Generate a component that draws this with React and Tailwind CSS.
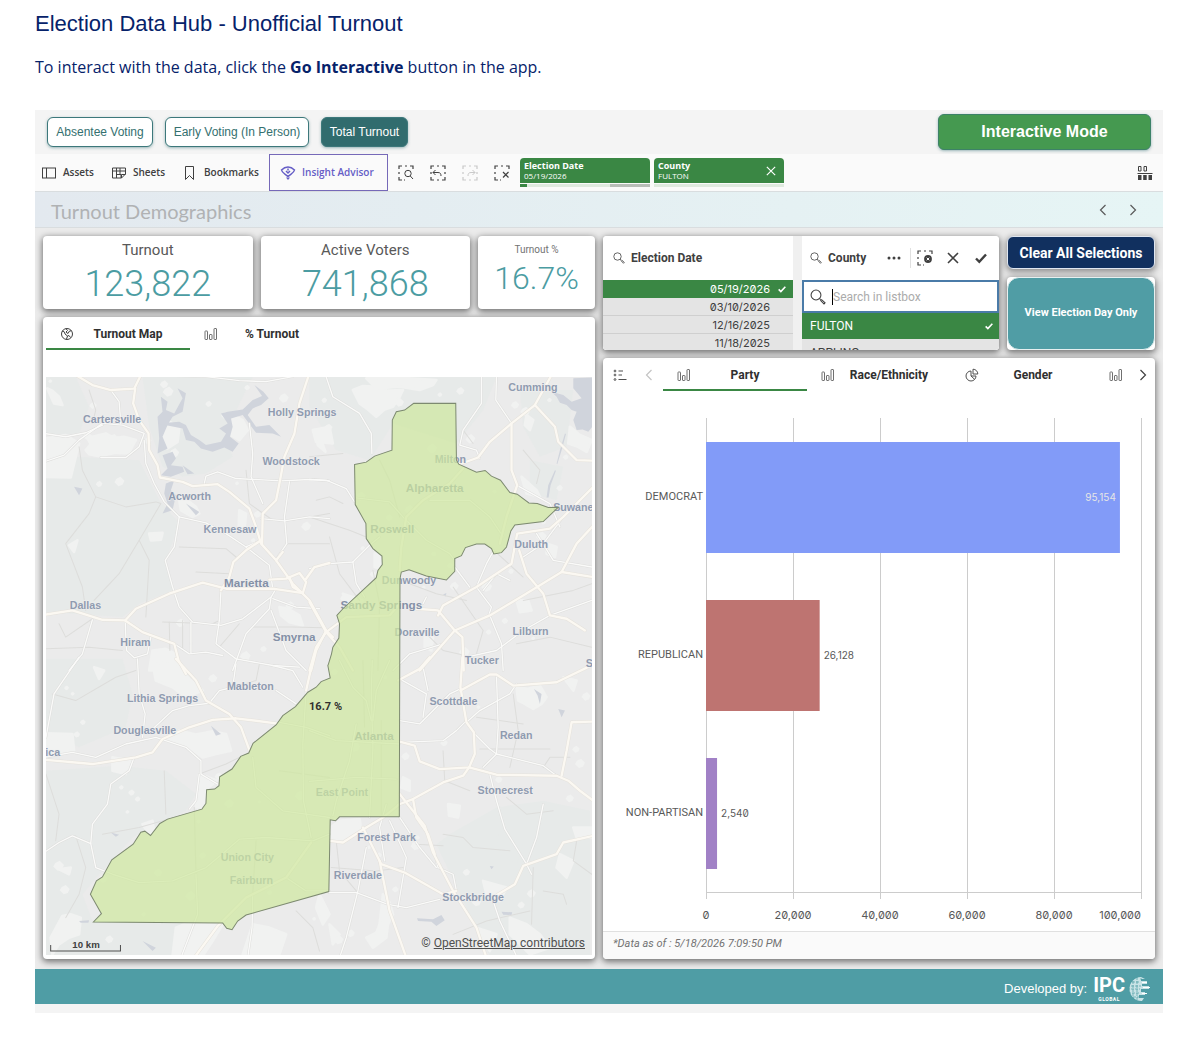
import { useState } from 'react';

const dates = ['05/19/2026', '03/10/2026', '12/16/2025', '11/18/2025'];

const parties = [
  { name: 'DEMOCRAT', votes: 95154, label: '95,154', color: '#829bf8', inside: true },
  { name: 'REPUBLICAN', votes: 26128, label: '26,128', color: '#be7471' },
  { name: 'NON-PARTISAN', votes: 2540, label: '2,540', color: '#a181c6' },
];

const ticks = ['0', '20,000', '40,000', '60,000', '80,000', '100,000'];

// base map, split in four tiles; each tile has its own origin
const tiles = [
  {
    x: 0, y: 0,
    major: [
      'M110 15L160 45L215 60L285 56L305 15', 'M288 56L282 100L300 150L328 190L330 240L355 285L362 322L430 335L460 348L535 342L570 365L630 415L650 470L665 520L710 570L760 640L810 690L860 780L880 800',
      'M808 15L780 100L765 190L735 260L720 340L710 390L670 430L668 520', 'M15 733L100 720L190 748L258 750L290 715L390 670L490 637L560 655L700 655L790 668',
      'M258 750L310 785L405 820L418 870L440 910', 'M860 780L830 840L815 900', 'M665 510L620 540L582 575L570 620L545 660',
      'M710 570L730 545M690 628L740 625L780 608L800 635L790 668L760 650L750 620M800 625L825 590L870 578',
    ],
    minor: [
      'M15 275L75 255L120 210L190 160L250 165L315 190L300 230L260 262L185 262', 'M215 60L240 95L245 160', 'M315 210L320 280L345 340L375 395L420 440L405 530L378 570L400 650L420 710L460 755L545 765L610 745L695 680L710 655',
      'M495 340L500 318L535 305L590 325L725 332L810 328L870 332', 'M420 440L500 458L560 490L620 530', 'M665 445L735 452L810 440L870 445', 'M750 335L735 440L742 520L715 560',
      'M258 750L262 840L285 862L325 850L335 800', 'M160 748L130 850L90 900', 'M545 660L540 750L530 820L590 865L700 885L780 890', 'M695 680L690 715L620 790L580 900', 'M455 755L455 850M405 820L450 850L500 845L550 855',
      'M695 720L740 840L800 900', 'M665 510L620 530L690 585L700 655', 'M320 15L500 20L600 32L680 35L760 20', 'M15 190L80 200L140 188L190 165', 'M630 160L640 250L635 320L670 400', 'M700 685L770 710L840 715',
    ],
    local: ['M120 230L130 300L170 380L150 430L80 520L130 650L140 720', 'M170 380L260 410L350 395L365 400L300 510L240 610L165 690', 'M300 510L330 570L320 740', 'M420 530L560 535L590 560', 'M470 605L570 610', 'M370 755L520 760L540 750', 'M390 755L392 840M430 750L430 840', 'M60 760L80 800L160 745', 'M21 835L150 830L250 840', 'M620 300L630 400L700 450', 'M755 450L870 430', 'M540 830L600 760M640 770L760 770L850 772', 'M150 60L170 120L160 160', 'M742 520L870 520'],
    woods: ['M21 21H110L150 110L120 190L21 195Z', 'M310 21H640L600 100L560 200L580 260L500 310L430 320L370 290L330 170Z', 'M21 320L95 320L110 260L300 270L360 390L420 460L380 570L400 660L300 700L250 740L180 735L21 725Z'],
    pale: ['M21 205L80 195L120 220L95 322L21 320Z', 'M140 195L160 200L200 190L225 204L255 200L290 210L278 232L270 250L230 248L180 258L150 252L140 240L155 222Z', 'M385 150L420 175L415 215L385 235L372 200Z', 'M720 710L745 715L780 735L790 765L750 755L725 735Z', 'M340 840L380 835L410 850L420 880L440 900H330Z', 'M90 525L115 510L105 545Z', 'M330 490L370 488L365 508L335 510Z', 'M825 180L845 210L858 245L835 225Z', 'M570 150L590 140L610 150L625 180L600 210L575 195Z', 'M600 420L620 430L615 480L598 470Z', 'M420 390L450 395L470 410L480 430L460 440L425 420Z', 'M25 55L40 62L60 80L70 105L45 100Z'],
    water: [
      'M365 80L385 95L380 120L405 130L430 85L415 55L440 70L430 125L400 140L385 165L370 200L385 235L355 250L360 205L355 140L370 125Z', 'M355 160L420 155L440 165L455 195L480 210L500 225L545 215L560 190L540 175L565 160L545 130L565 125L610 118L640 90L668 78L645 45L672 65L688 85L665 105L640 115L625 135L650 170L690 165L725 200L700 190L650 188L610 135L575 145L580 170L572 200L598 220L580 245L555 232L520 245L485 235L465 215L440 210L430 175Z', 'M370 255L400 245L410 265L395 285L430 290L435 305L395 320L365 315L385 295Z', 'M380 340L405 330L395 360L410 375L400 420L370 430L385 400L375 370Z', 'M430 285L465 310L445 312Z', 'M105 350L130 355L120 375Z', 'M440 400L480 425L470 435Z',
    ],
  },
  {
    x: 810, y: 0,
    major: [
      'M450 282L505 262L540 215L605 160L675 105L725 15', 'M675 105L735 170L745 215L800 270L860 272', 'M605 160L605 300L622 345L590 440L570 520', 'M0 695L25 740L50 785L90 830L130 900', 'M50 785L20 830L0 900',
      'M270 600L275 530L290 440L340 390L420 340L460 295', 'M330 900L435 780L540 735L640 675L755 605L800 520L860 455', 'M320 715L385 720L435 780L458 800L462 900', 'M755 605L860 622', 'M385 735L400 705L500 650L605 580L622 490L720 475L760 440L860 340', 'M628 540L650 610L700 670L720 735L770 745L825 780', 'M50 785L110 740L240 735L270 700',
    ],
    minor: [
      'M50 21L70 80L150 130L185 190L187 250', 'M515 15L515 100L460 180L450 225L500 240L510 265', 'M560 15L558 90L605 160', 'M0 328L50 330L110 355L135 395', 'M0 595L60 580L130 575L180 525L210 500', 'M500 650L530 580L552 540', 'M435 780L400 820L300 850L250 900', 'M540 735L575 820L580 900', 'M500 650L545 710L535 740', 'M140 383L240 395L280 440L350 510L420 550L435 570', 'M360 390L480 390L540 440L580 500', 'M620 345L720 400L750 470', 'M760 440L700 520L640 560', 'M720 735L640 780L560 840L470 860', 'M720 735L845 690', 'M340 700L350 680M435 590L480 650', 'M130 575L140 640L165 680', 'M600 630L560 610L520 660M680 490L730 570L845 590',
    ],
    local: ['M0 440L120 480L170 500', 'M60 500L90 610L150 690', 'M460 180L490 220', 'M640 240L690 300L680 340', 'M210 270L240 330L270 440', 'M530 520L640 620M640 690L790 660L845 640', 'M300 640L380 670L470 690', 'M430 650L520 780L500 850', 'M340 780L400 840L490 860', 'M620 820L720 800L845 830', 'M0 260L100 250M20 390L60 380L100 400', 'M190 600L210 700L205 900'],
    woods: ['M0 21H560L520 120L440 220L250 160L180 270L80 240L0 110Z', 'M630 60L790 60L770 230L690 260L640 170Z', 'M660 270L760 290L740 390L660 370Z'],
    pale: ['M130 60L160 48L190 50L235 62L280 60L268 84L250 110L225 118L200 140L175 118L150 100Z', 'M170 25L250 22L380 30L370 45L330 60L270 50L200 55Z', 'M650 135L670 150L660 180L645 165Z', 'M635 320L680 360L690 380L650 370Z', 'M195 550L215 555L212 595L195 590Z', 'M345 790L370 800L365 840L345 830Z', 'M620 690L655 690L665 720L630 725Z', 'M780 170L810 195L845 210L830 245L800 228L775 220Z', 'M100 670L160 690L130 720Z', 'M710 520L740 530L735 560L710 550Z', 'M10 180L60 170L70 220L20 215Z'],
    water: ['M790 25L870 21V165L845 172L835 185L818 178L800 180L790 150L800 125L785 120L770 105L750 98L740 80L725 65L760 75L785 95L815 85L790 55Z', 'M765 190L750 240L740 280L742 282L755 240L768 192Z', 'M735 300L715 345L710 382L716 382L722 345L738 302Z', 'M400 672L410 668L408 678Z'],
  },
  {
    x: 0, y: 870,
    major: [
      'M15 297L160 310L290 290L340 275L370 235L450 200L520 178L590 173L710 188', 'M410 -5L470 60L500 120L570 160L605 200L630 268', 'M820 0L800 90', 'M465 890L535 795L620 710L740 650L815 545',
    ],
    minor: [
      'M15 575L60 545L100 525L155 548L160 490L205 430L215 370L270 330L285 290', 'M155 548L170 620L220 640L300 665L400 660L500 620L560 570L600 535L680 530L820 540L870 520', 'M120 -10L45 100L21 230', 'M295 -5L300 100L318 160L310 230', 'M15 290L100 275L170 290L260 250L350 230L440 260L485 300L485 340L535 370', 'M480 340L470 420L450 445', 'M640 700L638 800L625 890', 'M470 640L475 760L425 890', 'M800 90L790 250L792 420L815 530', 'M330 215L400 150L450 135L510 128L540 90L580 80L590 10', 'M700 15L760 30L790 80', 'M710 90L770 130', 'M640 290L650 380L730 450L870 470', 'M720 185L800 200L870 225', 'M740 650L800 690L870 690',
    ],
    local: ['M40 100L110 120L230 50L290 30', 'M21 340L60 460L50 540', 'M375 330L380 460', 'M110 525L140 620L120 700L80 770', 'M190 520L300 500L440 460', 'M465 440L470 640', 'M720 330L870 350', 'M480 340L560 310L600 290', 'M660 10L650 60L550 90', 'M650 540L640 700', 'M770 750L820 800L840 870'],
    woods: ['M21 -5L250 -5L280 100L260 200L120 260L21 210Z', 'M21 330L240 315L380 330L470 400L440 450L280 530L180 640L130 700L160 780L430 785L400 885L21 885Z'],
    pale: ['M21 218L100 220L105 270L21 280Z', 'M420 210L470 222L520 212L560 220L568 245L575 270L530 280L490 290L450 260L380 240Z', 'M340 10L380 8L420 20L455 60L490 90L440 110L400 80L350 60Z', 'M70 765L95 760L125 770L120 820L90 830L60 850L40 880L35 830Z', 'M310 490L340 480L345 515L330 520Z', 'M480 340L535 360L500 385L490 440L470 440Z', 'M410 800L440 788L550 790L520 840L490 885H400Z', 'M640 790L690 800L740 820L720 880H610Z', 'M220 290L275 300L260 340L220 330Z', 'M60 625L95 620L90 640Z', 'M165 20L195 30L180 55Z'],
    water: ['M515 195L545 220L530 225Z', 'M120 780L150 778L148 785L125 785Z', 'M310 840L350 860L340 870Z', 'M215 515L240 522L230 528Z'],
  },
  {
    x: 810, y: 870,
    major: [
      'M265 60L330 25L360 -10', 'M458 -10L452 80L470 185L492 215L495 280L478 320L390 325L330 302L315 255L270 243', 'M452 90L540 42L560 42L610 75L740 65L850 12', 'M478 320L560 342L740 345L775 360L810 390L850 420', 'M265 432L310 415L400 365L460 345L478 320',
      'M270 400L345 495L370 575L430 690L500 800L530 890', 'M160 500L215 610L285 635L330 660L400 700L440 690', 'M850 183L785 185L770 270L755 345', 'M850 525L760 545L740 580L640 615L615 670L540 715', 'M62 540L100 545L170 500L220 470L270 430', 'M210 600L240 750L290 890', 'M310 415L320 470L355 520L375 580',
    ],
    minor: [
      'M58 695L140 695L235 730L290 740L390 715', 'M170 560L145 690L110 830L90 890', 'M540 340L560 420L585 505L650 610L665 640', 'M240 480L290 590L265 740', 'M270 245L400 240L440 210L470 180', 'M270 180L330 190L360 160L420 100L452 85', 'M560 42L565 200L560 280L520 320', 'M490 215L540 265L560 280L700 315L740 345', 'M470 185L510 150L600 100L620 70', 'M550 720L570 780L620 885', 'M270 55L350 100L340 170M340 20L355 90', 'M375 580L385 620L430 640L440 690', 'M230 430L210 500L225 600', 'M188 0L185 100L190 260L180 470', 'M90 0L130 80L170 120L185 180M240 0L200 90L190 180', 'M140 190L120 300L80 420L70 465', 'M700 430L680 530L650 610', 'M0 210L80 240L270 250', 'M0 362L140 350L260 355', 'M270 470L330 560L380 620',
    ],
    local: ['M610 100L625 210L600 320', 'M510 265L720 265', 'M400 270L405 360L480 390', 'M590 410L650 460L730 450', 'M700 320L720 290L780 290', 'M800 540L790 600L845 640', 'M670 620L665 790', 'M430 820L530 780L660 750', 'M700 690L760 700L770 730', 'M320 550L400 555', 'M400 520L460 530L490 560L600 570', 'M160 0L165 200M215 180L215 460', 'M80 540L90 630L140 690', 'M500 170L640 190', 'M65 620L200 630L280 620'],
    woods: ['M420 520L560 440L700 420L840 450V885L540 885L450 700L380 550Z', 'M560 520L640 550L620 610L570 580Z'],
    pale: ['M62 500L90 480L150 475L155 510L100 540L65 535Z', 'M620 80L655 85L690 75L710 110L695 130L670 145L645 130L625 120Z', 'M280 350L300 360L300 390L275 380Z', 'M415 430L450 435L445 470L418 465Z', 'M220 700L240 725L250 760L235 790L230 830L190 860L170 830L200 815L210 790Z', 'M600 770L650 790L690 820L720 860L660 880L630 850L600 820Z', 'M750 580L790 600L770 650L740 620Z', 'M30 700L60 760L40 790L20 740Z', 'M760 50L800 60L790 90Z', 'M520 660L590 680L570 720L530 700Z', 'M790 500L845 500V530L800 530Z', 'M500 800L560 820L540 870Z', 'M60 790L90 820L70 850Z'],
    water: ['M322 772L370 775L395 762L405 778L380 795L365 782L325 780Z', 'M672 85L695 100L690 130L683 105Z', 'M745 145L765 150L755 170Z', 'M575 752L607 754L605 762L580 761Z', 'M540 615L552 617L545 625Z'],
  },
];

// small clearings scattered over the whole map
const clearings = Array.from({ length: 110 }, (_, i) => {
  const x = 30 + ((i * 617) % 1610);
  const y = 30 + ((i * 389 + i * i * 7) % 1700);
  const r = 5 + ((i * 13) % 9);
  return `M${x} ${y}l${r} ${-r / 2}l${r} ${r}l${-r / 2} ${r}l${-r} ${r / 3}l${-r} ${-r}z`;
}).join('');

const places = [
  ['Cumming', 1479, 62], ['Cartersville', 219, 159], ['Holly Springs', 788, 138], ['Woodstock', 755, 284], ['Acworth', 451, 390],
  ['Kennesaw', 572, 487], ['Dallas', 139, 717], ['Hiram', 289, 828], ['Milton', 1232, 279], ['Duluth', 1474, 532],
  ['Dunwoody', 1108, 641], ['Doraville', 1132, 798], ['Lilburn', 1472, 793], ['Tucker', 1326, 880], ['Mableton', 633, 958],
  ['Lithia Springs', 370, 993], ['Douglasville', 317, 1091], ['East Point', 907, 1277], ['Union City', 624, 1470], ['Fairburn', 636, 1538],
  ['Scottdale', 1241, 1004], ['Redan', 1429, 1104], ['Stonecrest', 1396, 1269], ['Forest Park', 1041, 1410], ['Riverdale', 955, 1524],
  ['Stockbridge', 1300, 1590], ['Suwanee', 1609, 422], ['S', 1648, 890], ['ica', 41, 1157],
];

const cities = [
  ['Marietta', 621, 651], ['Smyrna', 764, 811], ['Alpharetta', 1185, 366], ['Roswell', 1058, 488], ['Sandy Springs', 1025, 716], ['Atlanta', 1003, 1109],
];

const county =
  'M945 283L980 276L1005 258L1057 240L1058 150L1070 125L1095 120L1122 100H1248L1250 270L1257 282L1310 306L1336 301L1355 318L1382 330L1410 367L1432 372L1467 398L1492 400L1525 412L1555 411L1510 454L1425 464L1413 482L1400 530L1385 547L1362 551L1355 535L1335 521L1310 521L1277 532L1265 556L1245 565V603L1220 629L1160 617L1108 598L1085 605L1081 625L1079 1338H900L888 1350L872 1347L868 1562L620 1632L595 1650L578 1676L562 1672L550 1656L163 1653L187 1628L154 1570L172 1530L190 1518L218 1467L282 1420L305 1384L317 1381L334 1394L362 1358L385 1345L488 1315L500 1298L502 1257L526 1255L539 1245L541 1218L578 1195L604 1157L628 1147L641 1118L710 1063L730 1035L768 1008L805 965L830 950L845 933L872 922L865 885L867 880L876 850L880 830L898 803L900 760L892 735L910 715L1010 622L1015 600L1028 583L1027 557L1000 535L980 505L979 460L947 403Z';

function Icon({ size = 'size-4', box = 16, children, className = '' }) {
  return (
    <svg viewBox={`0 0 ${box} ${box}`} className={`${size} shrink-0 ${className}`} fill="none" stroke="currentColor" strokeWidth="1" aria-hidden="true">
      {children}
    </svg>
  );
}

const BarsIcon = () => (
  <Icon size="size-3.5" box={14} className="text-[#707070]">
    <rect x="1" y="4" width="2.5" height="8.5" rx="0.5" />
    <rect x="5.5" y="7.5" width="2.5" height="5" rx="0.5" />
    <rect x="10" y="1.5" width="2.5" height="11" rx="0.5" />
  </Icon>
);

const GlobeIcon = () => (
  <Icon size="size-3.5" box={14} className="text-[#404040]">
    <circle cx="7" cy="7" r="5.5" />
    <path d="M2 4L4.5 5L5 7L7.5 9L6.5 12.2M6 1.7L7.5 3.5L6 5L8 6.5L9.5 4L11.5 3.8M7.5 9L9 8.5L10.5 10.5" />
  </Icon>
);

const PieIcon = () => (
  <Icon size="size-3.5" box={14} className="text-[#505050]">
    <path d="M6 3A5 5 0 1 0 11 8H6Z" />
    <path d="M8 1.2V6H12.8A4.8 4.8 0 0 0 8 1.2ZM6 8L9.7 11.4" />
  </Icon>
);

const SearchIcon = ({ size = 'size-3' }) => (
  <Icon size={size} box={12} className="text-[#404040]">
    <circle cx="4.5" cy="4.5" r="3.7" strokeWidth="0.8" />
    <path d="M7.2 7.2L8 8M8 8.7L8.7 8L11.3 10.4L10.5 11.3Z" strokeWidth="0.8" />
  </Icon>
);

// dashed selection square with something in its lower right corner
function SelectIcon({ children, full }) {
  return (
    <Icon>
      <path d={full ? 'M1 4V1H4M7 1H9M12 1H15V4M15 7V9M15 12V15H12M9 15H7M4 15H1V12M1 9V7' : 'M1 4V1H4M7 1H9M12 1H15V4M7 15H6M4 15H1V12M1 9V7'} strokeWidth="1.2" />
      {children}
    </Icon>
  );
}

const Chevron = ({ left, className = '' }) => (
  <Icon size="size-3" box={12} className={className}>
    <path d={left ? 'M8.5 1L3.5 6L8.5 11' : 'M3.5 1L8.5 6L3.5 11'} strokeWidth="1.2" />
  </Icon>
);

const Check = ({ size = 'size-2' }) => (
  <Icon size={size} box={12}>
    <path d="M1 6.5L4.3 9.8L11 2.5" strokeWidth="2.4" />
  </Icon>
);

const card = 'rounded-sm bg-white shadow-[0_2px_6px_1px_rgba(0,0,0,0.5)]';

function Kpi({ title, value, small, className }) {
  return (
    <div className={`${card} flex h-[73px] flex-col items-center ${className}`}>
      <h3 className={small ? 'mt-2 text-[10px] leading-3 text-[#737373]' : 'mt-1 text-[15px] leading-5 text-[#595959]'}>{title}</h3>
      <p className={small ? 'mt-1 text-[32px] leading-9 font-light text-[#4b9ca2]' : 'mt-1 text-[36px] leading-10 font-light text-[#4b9ca2]'}>{value}</p>
    </div>
  );
}

function Tab({ icon, label, active, onClick }) {
  return (
    <button
      role="tab"
      aria-selected={active}
      onClick={onClick}
      className={`flex h-[33px] w-36 shrink-0 items-center border-b-2 pt-0.5 pl-3.5 text-xs font-bold text-[#303030] ${active ? 'border-[#3a8744]' : 'border-transparent'}`}
    >
      {icon}
      <span className="flex-1 pr-2 text-center">{label}</span>
    </button>
  );
}

function Layer({ kind }) {
  return tiles.map((t) => (
    <g key={`${t.x}-${t.y}`} transform={`translate(${t.x} ${t.y})`}>
      {t[kind].map((d) => <path key={d} d={d} />)}
    </g>
  ));
}

function TurnoutMap() {
  return (
    <svg viewBox="21 21 1635 1731" preserveAspectRatio="xMidYMid slice" className="block w-full bg-[#ebebeb] font-['Liberation_Sans',sans-serif]" role="img" aria-label="Turnout map">
      <g fill="#e7eae9"><Layer kind="woods" /></g>
      <g fill="#f1f2f1" stroke="#f1f2f1" strokeWidth="8" strokeLinejoin="round"><Layer kind="pale" /></g>
      <path d={clearings} fill="#f1f2f1" />
      <g fill="#d0d4dc"><Layer kind="water" /></g>
      <g fill="none" strokeLinejoin="round" strokeLinecap="round">
        <g stroke="#dddddb" strokeWidth="3"><Layer kind="local" /></g>
        <g stroke="#dededc" strokeWidth="7"><Layer kind="minor" /></g>
        <g stroke="#fafaf9" strokeWidth="4"><Layer kind="minor" /></g>
        <g stroke="#e5e2dc" strokeWidth="10"><Layer kind="major" /></g>
        <g stroke="#fbf8f2" strokeWidth="7"><Layer kind="major" /></g>
      </g>
      <g fill="#8f9bb0" stroke="#f0f0f0" strokeWidth="3" paintOrder="stroke" textAnchor="middle" fontWeight="bold">
        <g fontSize="32">
          {places.map(([name, x, y]) => <text key={name} x={x} y={y}>{name}</text>)}
        </g>
        <g fontSize="35" fill="#8490a6">
          {cities.map(([name, x, y]) => <text key={name} x={x} y={y}>{name}</text>)}
        </g>
      </g>
      <path d={county} fill="#cfe89f" fillOpacity="0.72" stroke="#7d8a70" strokeWidth="3" />
      <text x="858" y="1019" fontSize="33" fontWeight="bold" textAnchor="middle" fill="#303030" className="font-[Roboto,sans-serif]">16.7 %</text>
      <path d="M35 1722V1740H244V1722" fill="none" stroke="#505050" strokeWidth="3" />
      <text x="141" y="1732" fontSize="29" fontWeight="bold" textAnchor="middle" fill="#404040">10 km</text>
    </svg>
  );
}

function PartyChart() {
  return (
    <svg viewBox="0 0 552 539" className="block w-full font-[Inter,sans-serif] text-[11px] slashed-zero" role="img" aria-label="Turnout by party">
      <g stroke="#cccccc" strokeWidth="1">
        {ticks.map((t, i) => <path key={t} d={`M${103.5 + i * 87} 27V508`} />)}
        <path d="M103 501.5H538" />
      </g>
      {ticks.map((t, i) => (
        <text key={t} x={i === 5 ? 538 : 103 + i * 87} y="528" fontSize="11" textAnchor={i === 5 ? 'end' : 'middle'} fill="#595959">{t}</text>
      ))}
      {parties.map((p, i) => {
        const y = 51 + i * 158;
        const w = (p.votes / 100000) * 435;
        return (
          <g key={p.name}>
            <rect x="103" y={y} width={w} height="111" fill={p.color} />
            <text x="100" y={y + 58} fontSize="11" textAnchor="end" fill="#595959" className="font-[Roboto,sans-serif]">{p.name}</text>
            <text x={p.inside ? 99 + w : 107 + w} y={y + 59} fontSize="10" textAnchor={p.inside ? 'end' : 'start'} fill={p.inside ? '#e6e6e6' : '#595959'}>{p.label}</text>
          </g>
        );
      })}
    </svg>
  );
}

function ElectionDateList() {
  return (
    <div className="flex w-[190px] shrink-0 flex-col bg-white">
      <div className="flex h-11 shrink-0 items-center gap-1.5 pl-2.5">
        <SearchIcon />
        <h3 className="text-xs font-bold text-[#404040]">Election Date</h3>
      </div>
      <ul className="font-[Inter,sans-serif] text-[11px] slashed-zero">
        {dates.map((d, i) => (
          <li key={d}>
            <button className={`flex h-[18px] w-full items-center justify-end gap-2 border-b pt-px pr-[7px] ${i === 0 ? 'border-[#3a8744] bg-[#3a8744] text-white' : 'border-[#cfcfcf] bg-[#e4e4e4] text-[#404040]'}`}>
              {d}
              <span className="flex w-2">{i === 0 && <Check />}</span>
            </button>
          </li>
        ))}
      </ul>
    </div>
  );
}

function CountyList() {
  return (
    <div className="flex min-w-0 flex-1 flex-col bg-white">
      <div className="flex h-11 shrink-0 items-center pr-3 pl-2 text-[#404040]">
        <SearchIcon />
        <h3 className="ml-1.5 flex-1 text-xs font-bold">County</h3>
        <button aria-label="More" className="mr-2">
          <Icon>
            <g fill="currentColor" stroke="none"><circle cx="3" cy="8" r="1.5" /><circle cx="8" cy="8" r="1.5" /><circle cx="13" cy="8" r="1.5" /></g>
          </Icon>
        </button>
        <span className="mr-1.5 h-5 w-px bg-[#e0e0e0]" />
        <button aria-label="Clear selection" className="mr-3.5">
          <SelectIcon>
            <circle cx="11" cy="9" r="3.9" fill="currentColor" stroke="none" />
            <path d="M9.7 7.7L12.3 10.3M12.3 7.7L9.7 10.3" stroke="#fff" />
          </SelectIcon>
        </button>
        <button aria-label="Cancel selection" className="mr-4">
          <Icon size="size-3" box={12}><path d="M1 1L11 11M11 1L1 11" strokeWidth="1.6" /></Icon>
        </button>
        <button aria-label="Confirm selection"><Check size="size-3" /></button>
      </div>
      <label className="flex h-[33px] shrink-0 items-center border-2 border-[#4a7ba8] pl-1.5">
        <span className="sr-only">Search in listbox</span>
        <SearchIcon size="size-4" />
        <span className="ml-1.5 h-4 w-px bg-black" />
        <input type="text" placeholder="Search in listbox" className="h-6 min-w-0 flex-1 bg-transparent text-xs outline-none placeholder:text-[#ababab]" />
      </label>
      <button className="flex h-[26px] shrink-0 items-center justify-between bg-[#3a8744] pr-1.5 pl-2 text-xs text-white">
        FULTON <Check />
      </button>
      <button className="h-[27px] shrink-0 bg-[#e4e4e4] pl-2 text-left text-xs text-[#404040]">APPLING</button>
    </div>
  );
}

function Chip({ field, value, children, bar }) {
  return (
    <div className="w-[130px]">
      <div className="flex h-[25px] items-center justify-between rounded-t-sm bg-[#3a8744] pr-2 pl-1">
        <div>
          {field}
          <p className="text-[8px] font-normal">{value}</p>
        </div>
        {children}
      </div>
      <div className="mt-px flex h-[3px] justify-between bg-[#dfeadf]">{bar}</div>
    </div>
  );
}

function Toolbar() {
  return (
    <div className="flex h-[37px] items-center bg-[#fafafa] pl-1.5 font-['Open_Sans',sans-serif] text-[10px] font-semibold text-[#404040]">
      <button className="flex w-[70px] items-center gap-1.5">
        <Icon><rect x="1.5" y="3" width="13" height="10" /><path d="M5.5 3V13" /></Icon>
        Assets
      </button>
      <button className="flex w-[71px] items-center gap-1.5">
        <Icon><path d="M1.5 3H14.5V9L10.5 13H1.5ZM1.5 6H14.5M5.5 3V13M9 3V9.5M5.5 9.5H10V13M10.5 13V9.5H14.5" /></Icon>
        Sheets
      </button>
      <button className="flex w-[87px] items-center gap-1.5">
        <Icon><path d="M3.500 1.500H11.500V14.500L7.500 10.500L3.500 14.500Z" /></Icon>
        Bookmarks
      </button>
      <button className="flex h-full w-[119px] items-center gap-1.5 border border-[#7669b8] pl-2.5 text-[#655dc6]">
        <Icon>
          <path d="M8 11.5C5.500 9 2 8 1.500 5C3.500 3 5.500 2 8 2S12.500 3 14.500 5C14 8 10.500 9 8 11.500Z" strokeWidth="1.5" />
          <path d="M8 3.500V5.500M6 6L8 8L10 6" strokeWidth="1.5" />
          <path d="M6 12.500H10L8 15Z" fill="currentColor" stroke="none" />
        </Icon>
        Insight Advisor
      </button>
      <div className="ml-2.5 flex gap-4">
        <button aria-label="Selections tool">
          <SelectIcon><circle cx="10" cy="8.5" r="3.2" /><path d="M12.300 11L15 14" /></SelectIcon>
        </button>
        <button aria-label="Step back">
          <SelectIcon full><path d="M5.500 5L3 7.500L5.500 10M3 7.500H8C10.500 7.500 11 9 11 11" /></SelectIcon>
        </button>
        <button aria-label="Step forward" disabled className="text-[#c9c9c9]">
          <SelectIcon full><path d="M10.500 5L13 7.500L10.500 10M13 7.500H9C6.500 7.500 6 9 6 11" /></SelectIcon>
        </button>
        <button aria-label="Clear all selections">
          <SelectIcon><path d="M9 7L14.500 12.500M14.500 7L9 12.500" strokeWidth="1.2" /></SelectIcon>
        </button>
      </div>
      <div className="ml-2.5 flex gap-1 text-[9px] leading-[10px] font-bold text-white">
        <Chip
          field="Election Date"
          value="05/19/2026"
          bar={<><span className="w-[7px] bg-[#3a8744]" /><span className="w-10 bg-[#b8beb8]" /></>}
        />
        <Chip field="County" value="FULTON">
          <button aria-label="Remove County"><Icon size="size-2.5" box={12}><path d="M1 1L11 11M11 1L1 11" strokeWidth="1.4" /></Icon></button>
        </Chip>
      </div>
      <button aria-label="Edit layout" className="mr-2.5 ml-auto">
        <Icon><path d="M1.500 1.500H4V6H1.500ZM7 1.500H9.500V6H7ZM0.500 8.500H15.500" /><path d="M1 10H4.500V15H1ZM6.200 10H9.700V15H6.200ZM11.500 10H15V15H11.500Z" fill="currentColor" stroke="none" /></Icon>
      </button>
    </div>
  );
}

export default function App() {
  const [mapTab, setMapTab] = useState('map');
  const [chartTab, setChartTab] = useState('party');
  const pill = "h-[30px] rounded-md border border-[#3d787b] font-['Liberation_Sans',sans-serif] text-xs shadow-[0_1px_3px_rgba(61,120,123,0.5)]";

  return (
    <div className="min-h-screen bg-white pr-[37px] pb-11 pl-[35px] font-[Roboto,sans-serif]">
      <header className="h-[110px] pt-2.5 text-[#06226a]">
        <h1 className="font-['Liberation_Sans',sans-serif] text-[22px] leading-7">Election Data Hub - Unofficial Turnout</h1>
        <p className="mt-[17px] font-['Open_Sans',sans-serif] text-base leading-6">
          To interact with the data, click the <strong>Go Interactive</strong> button in the app.
        </p>
      </header>

      <main className="bg-[#f4f4f4] pb-[9px]">
        <div className="flex h-11 items-center gap-3 px-3">
          <button className={`${pill} w-[106px] bg-white text-[#34706f]`}>Absentee Voting</button>
          <button className={`${pill} w-36 bg-white text-[#34706f]`}>Early Voting (In Person)</button>
          <button className={`${pill} w-[87px] bg-[#316c6e] text-white`}>Total Turnout</button>
          <button className="ml-auto h-9 w-[213px] rounded-md border border-[#3d8268] bg-[#459950] font-['Liberation_Sans',sans-serif] text-base font-bold text-white shadow-[0_1px_3px_rgba(61,120,123,0.5)]">
            Interactive Mode
          </button>
        </div>

        <Toolbar />

        <div className="flex h-[37px] items-center border-y border-[#d9dddf] bg-linear-to-r from-[#e3e9ef] to-[#e6f5f5] pr-6 pl-4">
          <h2 className="pt-0.5 font-[Lato,sans-serif] text-xl text-[#b0b2b4]">Turnout Demographics</h2>
          <button aria-label="Previous sheet" className="ml-auto text-[#595959]"><Chevron left /></button>
          <button aria-label="Next sheet" className="ml-[18px] text-[#595959]"><Chevron /></button>
        </div>

        <div className="flex gap-2 bg-[#ebebeb] px-2 pt-2 pb-2.5">
          <div className="flex min-w-0 flex-1 flex-col gap-2">
            <div className="flex gap-2">
              <Kpi title="Turnout" value="123,822" className="flex-1" />
              <Kpi title="Active Voters" value="741,868" className="flex-1" />
              <Kpi title="Turnout %" value="16.7%" small className="w-[117px]" />
            </div>
            <section className={`${card} relative flex-1 px-[3px] pb-1`}>
              <div className="flex" role="tablist">
                <Tab icon={<GlobeIcon />} label="Turnout Map" active={mapTab === 'map'} onClick={() => setMapTab('map')} />
                <Tab icon={<BarsIcon />} label="% Turnout" active={mapTab === 'pct'} onClick={() => setMapTab('pct')} />
              </div>
              <div className="pt-[27px]"><TurnoutMap /></div>
              <p className="absolute right-2.5 bottom-2 text-xs text-[#505050]">
                © <a href="#osm" className="underline">OpenStreetMap contributors</a>
              </p>
            </section>
          </div>

          <div className="flex min-w-0 flex-1 flex-col gap-2">
            <div className="flex h-[114px] gap-2">
              <div className={`${card} min-w-0 flex-1 overflow-hidden`}>
                <div className="flex h-full gap-[9px] bg-[#f0f0f0]">
                  <ElectionDateList />
                  <CountyList />
                </div>
              </div>
              <div className="flex w-[148px] flex-col gap-2">
                <button className="h-[33px] rounded-md border border-[#dfe6f0] bg-[#11305f] text-sm font-bold text-white shadow-[0_2px_6px_1px_rgba(0,0,0,0.4)]">Clear All Selections</button>
                <div className={`${card} flex flex-1`}>
                  <button className="flex-1 rounded-xl border border-[#e6f0f0] bg-[#509da5] text-[11px] font-bold text-white">View Election Day Only</button>
                </div>
              </div>
            </div>
            <section className={`${card} flex flex-1 flex-col overflow-hidden`}>
              <div className="flex items-center pr-1.5 pl-2.5">
                <button aria-label="Chart list" className="text-[#505050]">
                  <Icon size="size-3.5" box={14}>
                    <path d="M5.500 3H10M5.500 7H9M5.500 11.500H13.500" strokeWidth="1.2" />
                    <circle cx="2" cy="3" r="0.9" /><circle cx="2" cy="7" r="0.9" /><circle cx="2" cy="11.5" r="0.9" />
                  </Icon>
                </button>
                <button aria-label="Previous tab" disabled className="mr-2 ml-4 text-[#c4c4c4]"><Chevron left /></button>
                <div className="flex min-w-0 flex-1 overflow-hidden" role="tablist">
                  <Tab icon={<BarsIcon />} label="Party" active={chartTab === 'party'} onClick={() => setChartTab('party')} />
                  <Tab icon={<BarsIcon />} label="Race/Ethnicity" active={chartTab === 'race'} onClick={() => setChartTab('race')} />
                  <Tab icon={<PieIcon />} label="Gender" active={chartTab === 'gender'} onClick={() => setChartTab('gender')} />
                  <Tab icon={<BarsIcon />} label="" active={chartTab === 'more'} onClick={() => setChartTab('more')} />
                </div>
                <button aria-label="Next tab" className="text-[#404040]"><Chevron /></button>
              </div>
              <PartyChart />
              <p className="mt-auto flex h-7 items-center border-t border-[#e0e0e0] bg-[#fafafa] pb-0.5 pl-2.5 text-[11px] text-[#737373] italic">
                *Data as of : 5/18/2026 7:09:50 PM
              </p>
            </section>
          </div>
        </div>

        <footer className="flex h-[35px] items-center justify-end bg-[#4f9da5] pr-3 font-['Liberation_Sans',sans-serif] text-white">
          <span className="mt-1 mr-1.5 text-[13px]">Developed by:</span>
          <div className="mt-1 mr-0.5 flex flex-col items-center font-[Roboto,sans-serif]">
            <span className="text-xl leading-5 font-bold">IPC</span>
            <span className="text-[5px] leading-[8px] font-bold tracking-widest">GLOBAL</span>
          </div>
          <svg viewBox="0 0 24 26" className="mt-1 h-[26px] w-6" aria-hidden="true">
            <path d="M14 1A12 12 0 1 0 15 25L17 22H12V19H18V16H14V13H22V10H15V8H20V5H14V3H18Z" fill="#c9e3e6" />
            <path d="M1 6H13M0 10H14M0 13H13M1 17H13M2 21H12M6 1V24M10 1V25M14 2V4" stroke="#4f9da5" strokeWidth="0.7" strokeDasharray="3 1" />
            <path d="M15 6.500H20M16 11.500H23M15 17.500H20" stroke="#fff" strokeWidth="1" />
          </svg>
        </footer>
      </main>
    </div>
  );
}
